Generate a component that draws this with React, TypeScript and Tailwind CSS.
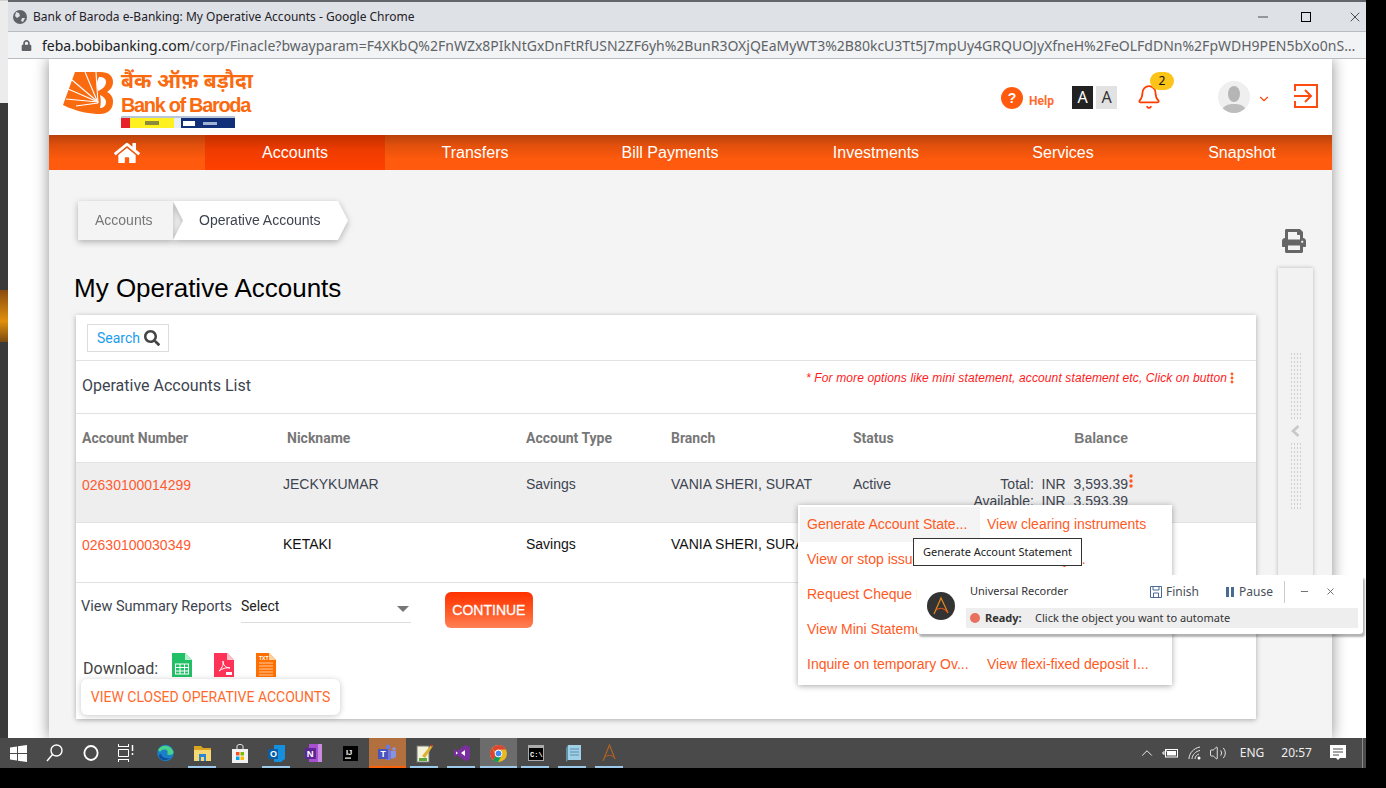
import React from "react";
import { FaHome, FaPrint, FaSearch, FaLock } from "react-icons/fa";
import { ChevronDown, ChevronUp, Bell, Volume2, Minus, X } from "lucide-react";

const arial = "font-['Liberation_Sans',Arial,sans-serif]";
const roboto = "font-['Roboto','Liberation_Sans',sans-serif]";
const noto = "font-['Noto_Sans','Open_Sans',sans-serif]";

function Dots({ small }: { small?: boolean }) {
  return (
    <svg width="4" height={small ? 12 : 14} viewBox={small ? "0 0 4 12" : "0 0 4 14"} className="block">
      <circle cx="2" cy={small ? 2 : 2} r={small ? 1.4 : 1.7} fill="#ff5a1f" />
      <circle cx="2" cy={small ? 6 : 7} r={small ? 1.4 : 1.7} fill="#ff5a1f" />
      <circle cx="2" cy={small ? 10 : 12} r={small ? 1.4 : 1.7} fill="#ff5a1f" />
    </svg>
  );
}

function Logo() {
  return (
    <div className="flex items-start gap-[8px] w-[174px] h-[58px]">
      <svg width="50" height="43" viewBox="0 0 50 43" className="block mt-px shrink-0">
        <path d="M12 0H37C46 0 50 4 50 10C50 15 47 18 44 20C48 22 50 25 50 30C50 38 44 42 37 42C28 42 14 40 0 33Z" fill="#fa6a0f" />
        <path d="M36 5C41 5 43 7 43 10C43 14 40 17 35 19C33 13 34 9 36 5Z" fill="#fff" />
        <path d="M37 23C41 25 43 27 43 30C43 34 40 36 37 36C38 32 38 27 37 23Z" fill="#fff" />
        <g stroke="#fff" strokeWidth="1.1" fill="none">
          <path d="M35 30L9 8" />
          <path d="M35 30L5 17" />
          <path d="M35 30L3 27" />
          <path d="M35 31L22 0" />
          <path d="M35 31L13 34" />
          <path d="M35 31L33 0" />
        </g>
      </svg>
      <div className="flex flex-col w-[116px]">
        <div className={`h-[24px] text-[21px] leading-[24px] font-bold text-[#fa6a0f] whitespace-nowrap font-['Noto_Sans_Devanagari','Lohit_Devanagari','Noto_Sans',sans-serif]`}>
          बैंक ऑफ़ बड़ौदा
        </div>
        <div className={`${arial} h-[20px] text-[20px] leading-[20px] font-bold text-[#fa6a0f] tracking-[-1.35px] whitespace-nowrap`}>
          Bank of Baroda
        </div>
        <div className="mt-px h-[2px] w-[114px] bg-[#b9c6d8]" />
        <div className="flex w-[114px] h-[10px]">
          <div className="w-[9px] bg-[#e8202a]" />
          <div className="w-[44px] bg-[#fff01f] flex justify-center items-center"><div className="w-[14px] h-[4px] bg-[#8c8a3a]" /></div>
          <div className="w-[7px] bg-[#e8eef5]" />
          <div className="flex-1 bg-[#12307a] flex items-center gap-[8px] pl-[2px]">
            <div className="w-[12px] h-[5px] bg-white" />
            <div className="w-[14px] h-[3px] bg-[#9fb2d6]" />
          </div>
        </div>
      </div>
    </div>
  );
}

function FileIcon({ color, fold, kind }: { color: string; fold: string; kind: "sheet" | "pdf" | "txt" }) {
  return (
    <svg width="20" height="24" viewBox="0 0 20 24" className="block">
      <path d="M0 0H13L20 7V24H0Z" fill={color} />
      <path d="M13 0L20 7H13Z" fill={fold} />
      {kind === "sheet" && (
        <g stroke="#fff" strokeWidth="1" fill="none">
          <rect x="3.5" y="11" width="13" height="10" />
          <path d="M3.5 14.5H16.5M3.5 18H16.5M8 11V21M12.5 11V21" />
        </g>
      )}
      {kind === "pdf" && (
        <g>
          <path d="M5 18C9 14 10 10 9 8C8 10 11 15 16 15C12 14 8 16 5 18Z" stroke="#fff" strokeWidth="1" fill="none" />
          <rect x="12" y="19" width="6" height="3" fill="#fff" />
        </g>
      )}
      {kind === "txt" && (
        <g>
          <text x="3" y="7" fontSize="5" fontWeight="700" fill="#fff" fontFamily="Liberation Sans">TXT</text>
          <path d="M3 10H17M3 13H17M3 16H17M3 19H17M3 22H17" stroke="#ffc9a0" strokeWidth="1" />
        </g>
      )}
    </svg>
  );
}

function Stripes() {
  const cells = Array.from({ length: 68 });
  return (
    <div className="grid grid-cols-4 gap-x-[2px] gap-y-[2px] w-[10px]">
      {cells.slice(0, 4 * 17).map((_, i) => (
        <div key={i} className={`w-[1px] h-[2px] bg-[#cfcfcf]`} />
      ))}
    </div>
  );
}

function Tb({ children, bg, line, wide }: { children?: React.ReactNode; bg?: string; line?: string; wide?: boolean }) {
  return (
    <div className={`w-[37px] h-[30px] flex items-center justify-center relative ${bg ?? ""}`}>
      {children}
      {line && <div className={`absolute bottom-0 h-[2px] ${wide ? "left-0 right-0" : "left-[4px] right-[5px]"} ${line}`} />}
    </div>
  );
}

function Taskbar() {
  const blue = "bg-[#9dc9ea]";
  return (
    <div className="w-[1366px] h-[30px] bg-[#4a4a4a] flex items-center shrink-0 text-white">
      <div className="w-[36px] flex justify-center">
        <svg width="17" height="17" viewBox="0 0 17 17"><path d="M0 2.5L7 1.5V8H0ZM8 1.3L17 0V8H8ZM0 9H7V15.5L0 14.5ZM8 9H17V17L8 15.7Z" fill="#fff" /></svg>
      </div>
      <div className="w-[37px] flex justify-center">
        <svg width="17" height="18" viewBox="0 0 17 18" fill="none" stroke="#fff" strokeWidth="1.4"><circle cx="10.5" cy="6.5" r="5.5" /><path d="M6.5 10.5L1 17" /></svg>
      </div>
      <div className="w-[36px] flex justify-center">
        <svg width="16" height="16" viewBox="0 0 16 16" fill="none" stroke="#fff" strokeWidth="1.8"><ellipse cx="8" cy="8" rx="6.6" ry="7" /></svg>
      </div>
      <div className="w-[38px] flex justify-center pr-[4px]">
        <svg width="16" height="18" viewBox="0 0 16 18" fill="none" stroke="#fff" strokeWidth="1"><path d="M0 2.5H11M0 15.5H11M0.5 5.5H10.5V12.5H0.5Z" /><path d="M0.5 0V2M10.5 0V2M0.5 16V18M10.5 16V18" /><path d="M14.5 1V7M14.5 9V11" strokeWidth="1.5" /></svg>
      </div>
      <Tb>
        <svg width="17" height="18" viewBox="0 0 17 18"><circle cx="8.5" cy="9" r="8.3" fill="#1a7fc4" /><path d="M1 6C4 0 14 0 16.5 8C16.8 11 12 12 10 10C13 6 6 3 3 8Z" fill="#49d28c" /><path d="M4 10C5 14 10 15 13 14C9 18 2 16 2 11Z" fill="#0c4fa0" /></svg>
      </Tb>
      <Tb line={blue}>
        <svg width="17" height="17" viewBox="0 0 17 17"><path d="M0 1H7L9 3H17V6H0Z" fill="#d9a520" /><path d="M0 5H17V16H0Z" fill="#f7d774" /><path d="M5 9H12V16H10V12H7V16H5Z" fill="#2a86d4" /></svg>
      </Tb>
      <Tb>
        <svg width="16" height="19" viewBox="0 0 16 19"><path d="M0 5H16V19H0Z" fill="#f2f2f2" /><path d="M5 5V2C5 0 11 0 11 2V5" stroke="#e8e8e8" strokeWidth="1" fill="none" /><rect x="4" y="8" width="3.5" height="3.5" fill="#f25022" /><rect x="8.5" y="8" width="3.5" height="3.5" fill="#7fba00" /><rect x="4" y="12.5" width="3.5" height="3.5" fill="#00a4ef" /><rect x="8.5" y="12.5" width="3.5" height="3.5" fill="#ffb900" /></svg>
      </Tb>
      <Tb line={blue}>
        <svg width="17" height="17" viewBox="0 0 17 17"><path d="M6 0H17V14L13 17H6Z" fill="#1490df" /><rect x="0" y="4" width="10" height="10" fill="#0a5ea8" /><text x="2" y="12" fontSize="9" fontWeight="700" fill="#fff" fontFamily="Liberation Sans">O</text></svg>
      </Tb>
      <Tb>
        <svg width="17" height="18" viewBox="0 0 17 18"><rect x="4" y="0" width="13" height="18" fill="#a64fd0" /><rect x="13" y="0" width="4" height="18" fill="#c98ae0" /><rect x="0" y="4" width="11" height="11" fill="#5e2594" /><text x="1.8" y="13" fontSize="9.5" fontWeight="700" fill="#fff" fontFamily="Liberation Sans">N</text></svg>
      </Tb>
      <Tb>
        <svg width="15" height="15" viewBox="0 0 15 15"><rect width="15" height="15" fill="#000" /><text x="3" y="8.5" fontSize="7.5" fontWeight="700" fill="#fff" fontFamily="Liberation Sans">IJ</text><rect x="2" y="11.5" width="6" height="1.2" fill="#fff" /></svg>
      </Tb>
      <Tb bg="bg-[#b3703f]" line="bg-[#f7630c]" wide>
        <svg width="19" height="18" viewBox="0 0 19 18"><circle cx="10" cy="3" r="2.4" fill="#6f78d8" /><circle cx="16" cy="5" r="1.8" fill="#8a93e0" /><path d="M6 6H13V15C10 18 7 15 6 13Z" fill="#6f78d8" /><path d="M13 7H18V12C18 14 15 15 13 14Z" fill="#8a93e0" /><rect x="0" y="5" width="10" height="10" fill="#4b53bc" /><text x="2.6" y="13" fontSize="8.5" fontWeight="700" fill="#fff" fontFamily="Liberation Sans">T</text></svg>
      </Tb>
      <Tb line={blue}>
        <svg width="17" height="19" viewBox="0 0 17 19"><rect x="1" y="2" width="12" height="16" fill="#f4f4dc" stroke="#777" strokeWidth="1" /><path d="M3 14H11V17H3Z" fill="#5aa83c" /><path d="M6 12L15 1L17 2L9 14Z" fill="#e0b030" /><path d="M14 1L17 0L16 3Z" fill="#a33" /></svg>
      </Tb>
      <Tb line={blue}>
        <svg width="16" height="16" viewBox="0 0 16 16"><path d="M11 0L16 2V14L11 16L3 10L1 12L0 11V5L1 4L3 6Z" fill="#7a2f9e" /><path d="M11 5L7 8L11 11ZM2 6.5V9.5L4 8Z" fill="#fff" /></svg>
      </Tb>
      <Tb bg="bg-[#6c6c6c]" line={blue} wide>
        <svg width="17" height="17" viewBox="0 0 17 17"><circle cx="8.5" cy="8.5" r="8.5" fill="#e8b923" /><path d="M8.5 0A8.5 8.5 0 0 1 16 4.5H8.5A4 4 0 0 0 4.8 6.4L2.2 2.9A8.5 8.5 0 0 1 8.5 0Z" fill="#db4437" /><path d="M2.2 2.9L6 10.5L3.2 15.2A8.5 8.5 0 0 1 2.2 2.9Z" fill="#db4437" /><path d="M6 10.5A4 4 0 0 0 11 11.8L8 17A8.5 8.5 0 0 1 3.2 15.2Z" fill="#0f9d58" /><circle cx="8.5" cy="8.5" r="3.4" fill="#4285f4" stroke="#fff" strokeWidth="1" /></svg>
      </Tb>
      <Tb line={blue}>
        <svg width="16" height="16" viewBox="0 0 16 16"><rect width="16" height="16" fill="#aaa" /><rect x="1" y="3" width="14" height="12" fill="#000" /><text x="2" y="11.5" fontSize="7" fontWeight="700" fill="#fff" fontFamily="Liberation Mono">C:\</text></svg>
      </Tb>
      <Tb line={blue}>
        <svg width="16" height="18" viewBox="0 0 16 18"><path d="M3 1H16V16H1Z" fill="#9fd0e8" /><path d="M1 4L3 1V16L1 18Z" fill="#5d8fa8" /><path d="M5 5H14M5 8H14M5 11H14" stroke="#5d8fa8" strokeWidth="1" /></svg>
      </Tb>
      <Tb line={blue}>
        <svg width="15" height="18" viewBox="0 0 15 18" fill="none"><path d="M1 17L7.5 1L13 15" stroke="#b5651d" strokeWidth="1.1" /><path d="M3 13C7 10 11 11 13 15" stroke="#c2541c" strokeWidth="1" /></svg>
      </Tb>
      <div className="flex-1 flex items-center h-full relative">
        <div className="flex-1" />
        <ChevronUp size={18} strokeWidth={1.2} className="mr-[6px]" />
        <svg width="17" height="12" viewBox="0 0 17 12" className="mr-[9px]" fill="none" stroke="#fff"><rect x="3.5" y="2.5" width="12" height="7.5" /><rect x="5" y="4" width="9" height="4.5" fill="#fff" stroke="none" /><path d="M1 5H4V3M1 5V7H3" /></svg>
        <svg width="14" height="14" viewBox="0 0 14 14" className="mr-[7px]" fill="none" stroke="#e4e4e4" strokeWidth="1"><path d="M1 13C1 7 6 2 12 1M4 13C4 9 8 5 12 4.5M7 13C7 10.500 9 8.500 11 8" /><circle cx="11" cy="12" r="1.5" fill="#fff" stroke="none" /></svg>
        <Volume2 size={18} strokeWidth={1.1} className="mr-[13px]" />
        <span className={`${noto} text-[12px] mr-[17px] text-[#eee]`}>ENG</span>
        <span className={`${noto} text-[12px] mr-[18px] text-[#eee]`}>20:57</span>
        <svg width="16" height="17" viewBox="0 0 16 17" className="mr-[20px]"><path d="M0 0H16V13H10L8 15L6 13H0Z" fill="#fff" /><path d="M3 4H13M3 7H13M3 10H9" stroke="#4a4a4a" strokeWidth="1" /></svg>
        <div className="absolute right-[3px] top-0 bottom-0 w-px bg-[#8a8a8a]" />
      </div>
    </div>
  );
}

function Row({ num, nick, branch, status, shaded, dark, balance }: { num: string; nick: string; branch: string; status?: string; shaded?: boolean; dark?: boolean; balance?: boolean }) {
  const tone = dark ? "text-[#111]" : "text-[#3d4450]";
  return (
    <div className={`h-[60px] border-b border-[#e2e2e2] pl-[6px] grid grid-cols-[201px_243px_145px_182px_275px_47px_auto] text-[14px] leading-[20px] pt-[11px] ${shaded ? "bg-[#eeeeee]" : "bg-white"} ${tone} ${arial}`}>
      <div className="text-[#ff5a30] pt-px">{num}</div>
      <div>{nick}</div>
      <div>{shaded ? "Savings" : "Savings"}</div>
      <div>{branch}</div>
      <div className="relative">
        {status}
        {balance && (
          <div className="absolute right-0 top-0 text-right">
            <div className="whitespace-nowrap leading-[20px]">Total:&nbsp; INR&nbsp; 3,593.39</div>
            <div className="whitespace-nowrap leading-[15px]">Available:&nbsp; INR&nbsp; 3,593.39</div>
          </div>
        )}
      </div>
      <div className="pl-[1px] pt-[-1px]"><Dots /></div>
    </div>
  );
}

function MenuItem({ text, hover }: { text: string; hover?: boolean }) {
  return (
    <div className={`w-[180px] h-[35px] flex items-center pl-[7px] text-[14px] text-[#ff5a1f] whitespace-nowrap ${arial} ${hover ? "bg-[#f4f4f4]" : ""}`}>
      {text}
    </div>
  );
}

export default function App() {
  return (
    <div className="relative w-[1386px] h-[788px] bg-black overflow-hidden flex flex-col">
      <div className="flex h-[738px] shrink-0 w-[1366px]">
        {/* desktop sliver */}
        <div className="w-[8px] flex flex-col shrink-0">
          <div className="h-[103px] bg-[#ececec] border-t border-[#d0d0d0]" />
          <div className="h-[187px] bg-[#3a3a3a]" />
          <div className="h-[52px] bg-[linear-gradient(180deg,#8a4a10,#e0900c_60%,#7a4a10)]" />
          <div className="flex-1 bg-[#3a3a3a]" />
        </div>
        {/* browser window */}
        <div className="w-[1358px] flex flex-col">
          <div className="h-[32px] bg-[#dee1e6] border-t-2 border-[#62666a] border-b border-b-[#b9bcc0] flex items-center shrink-0 pl-[5px]">
            <svg width="14" height="14" viewBox="0 0 14 14" className="mr-[6px]"><circle cx="7" cy="7" r="7" fill="#5f6368" /><path d="M3 2L6 3L7 6L4 8L2 6ZM9 8L12 8L10 12L8 11Z" fill="#dee1e6" /></svg>
            <span className={`${noto} text-[12px] text-[#1f2226] whitespace-nowrap`}>Bank of Baroda e-Banking: My Operative Accounts - Google Chrome</span>
            <div className="flex-1" />
            <Minus size={16} strokeWidth={1} className="text-black mr-[30px]" />
            <div className="w-[10px] h-[10px] border border-black mr-[36px]" />
            <X size={16} strokeWidth={1} className="text-black mr-[3px]" />
          </div>
          <div className="h-[27px] bg-[#f1f3f4] border-b border-[#b9bcc0] flex items-center shrink-0 pl-[13px]">
            <FaLock size={11} className="text-[#5f6368] mr-[10px] shrink-0" />
            <div className={`${noto} text-[14px] text-[#5f6368] truncate w-[1316px]`}>
              <span className="text-[#202124]">feba.bobibanking.com</span>/corp/Finacle?bwayparam=F4XKbQ%2FnWZx8PIkNtGxDnFtRfUSN2ZF6yh%2BunR3OXjQEaMyWT3%2B80kcU3Tt5J7mpUy4GRQUOJyXfneH%2FeOLFdDNn%2FpWDH9PEN5bXo0nSFLJtSA3xk3ZqW8nPqLm2R7T
            </div>
          </div>
          <div className="flex-1 bg-white pl-[41px] overflow-hidden">
            <div className="w-[1283px] h-[679px] flex flex-col shadow-[0_0_14px_rgba(0,0,0,0.45)]">
              {/* header */}
              <div className="h-[76px] bg-white flex items-center shrink-0 pl-[14px]">
                <div className="pt-[6px]"><Logo /></div>
                <div className="flex-1" />
                <div className="w-[22px] h-[22px] rounded-full bg-[#ff5a0d] text-white flex items-center justify-center text-[14px] font-bold mt-[2px] font-['Liberation_Sans']">?</div>
                <span className={`${roboto} text-[12px] font-bold text-[#ff6a2c] ml-[6px] mt-[8px]`}>Help</span>
                <div className={`w-[21px] h-[23px] bg-[#222] text-white flex items-center justify-center text-[16px] ml-[18px] ${noto}`}>A</div>
                <div className={`w-[21px] h-[23px] bg-[#e2e2e2] text-[#333] flex items-center justify-center text-[16px] ml-[3px] ${noto}`}>A</div>
                <div className="relative ml-[19px] w-[26px] h-[26px]">
                  <Bell size={26} strokeWidth={1.6} className="text-[#ff3d00]" />
                  <div className={`absolute left-[14px] top-[-12px] w-[24px] h-[18px] rounded-full bg-[#fcc419] text-[12px] text-[#111] flex items-center justify-center ${noto}`}>2</div>
                </div>
                <div className="ml-[56px] w-[32px] h-[32px] rounded-full bg-[#efefef] overflow-hidden">
                  <svg width="32" height="32" viewBox="0 0 32 32"><ellipse cx="16" cy="13" rx="6" ry="8" fill="#b5b5b5" /><path d="M3 32C4 24 11 23 16 23C21 23 28 24 29 32Z" fill="#bdbdbd" /></svg>
                </div>
                <ChevronDown size={14} strokeWidth={2} className="text-[#ff4a10] ml-[7px] mt-[4px]" />
                <svg width="24" height="24" viewBox="0 0 24 24" fill="none" stroke="#ff4a10" strokeWidth="2" className="ml-[23px] mr-[14px] -mt-[3px]">
                  <path d="M1 7V1H23V23H1V17" />
                  <path d="M0 12H16M11 6L17 12L11 18" />
                </svg>
              </div>
              {/* nav */}
              <div className={`h-[35px] shrink-0 flex bg-[linear-gradient(180deg,#b8420c_0%,#e2500c_30%,#ff5a0d_70%)] text-white text-[16px] ${arial}`}>
                <div className="w-[156px] flex items-center justify-center"><FaHome size={26} /></div>
                <div className="w-[180px] flex items-center justify-center bg-[linear-gradient(180deg,#c23000_0%,#f03c00_45%,#ff4000_100%)]">Accounts</div>
                <div className="w-[180px] flex items-center justify-center">Transfers</div>
                <div className="w-[210px] flex items-center justify-center">Bill Payments</div>
                <div className="w-[202px] flex items-center justify-center">Investments</div>
                <div className="w-[172px] flex items-center justify-center">Services</div>
                <div className="w-[183px] flex items-center justify-center pl-[3px]">Snapshot</div>
              </div>
              {/* content */}
              <div className="flex-1 bg-[#f4f4f4] flex min-h-0">
                <div className="w-[1207px] pl-[27px] shrink-0 flex flex-col">
                  <div className="pt-[31px] pl-[2px] drop-shadow-[0_2px_3px_rgba(0,0,0,0.28)]">
                    <div className={`flex h-[39px] text-[14px] ${arial}`}>
                      <div className="w-[95px] bg-[#f4f4f4] flex items-center pl-[17px] text-[#777]">Accounts</div>
                      <div className="w-[175px] bg-white flex items-center pl-[26px] text-[#3d4450] [clip-path:polygon(0_0,165px_0,175px_50%,165px_100%,0_100%,10px_50%)]">Operative Accounts</div>
                    </div>
                  </div>
                  <h1 className={`${arial} text-[26px] leading-[36px] text-black mt-[30px] -ml-[2px] mb-[9px]`}>My Operative Accounts</h1>
                  <div className="w-[1180px] h-[404px] bg-white shadow-[0_1px_5px_rgba(0,0,0,0.3)] flex flex-col">
                    <div className="h-[46px] border-b border-[#e2e2e2] pl-[11px] pt-[9px] shrink-0">
                      <div className={`w-[82px] h-[28px] border border-[#dcdcdc] flex items-center pl-[9px] gap-[4px] text-[14px] text-[#1a9cf0] ${roboto}`}>
                        Search <FaSearch size={16} className="text-[#444]" />
                      </div>
                    </div>
                    <div className="h-[53px] border-b border-[#e2e2e2] flex pl-[6px] shrink-0">
                      <div className={`${roboto} text-[16px] leading-[50px] text-[#3d4450]`}>Operative Accounts List</div>
                      <div className="flex-1" />
                      <div className={`${arial} italic text-[12px] text-[#ff1a1a] leading-[34px] whitespace-nowrap tracking-[0.12px] mr-[3px]`}>* For more options like mini statement, account statement etc, Click on button</div>
                      <div className="w-[26px] pt-[11px]"><Dots small /></div>
                    </div>
                    <div className={`h-[49px] border-b border-[#e2e2e2] pl-[6px] grid grid-cols-[201px_243px_145px_182px_275px] items-center text-[14px] font-bold text-[#777] shrink-0 ${roboto}`}>
                      <div>Account Number</div>
                      <div className="pl-[4px]">Nickname</div>
                      <div>Account Type</div>
                      <div>Branch</div>
                      <div className="relative">Status<span className={`absolute right-0 ${arial}`}>Balance</span></div>
                    </div>
                    <Row num="02630100014299" nick="JECKYKUMAR" branch="VANIA SHERI, SURAT" status="Active" shaded balance />
                    <Row num="02630100030349" nick="KETAKI" branch="VANIA SHERI, SURAT" dark />
                    <div className="flex items-start pl-[5px] pt-[9px] h-[32px] mt-0 shrink-0">
                      <span className={`${roboto} text-[14.5px] leading-[30px] text-[#3d4450] mt-[0px] whitespace-nowrap`}>View Summary Reports</span>
                      <div className="ml-[9px] w-[170px] h-[31px] border-b border-[#dcdcdc] relative shrink-0">
                        <span className={`${roboto} text-[14px] leading-[29px] text-[#222]`}>Select</span>
                        <div className="absolute right-[2px] top-[14px] w-0 h-0 border-l-[6.500px] border-r-[6.500px] border-t-[6px] border-l-transparent border-r-transparent border-t-[#777]" />
                      </div>
                      <div className={`ml-[34px] w-[88px] h-[36px] rounded-[6px] bg-[linear-gradient(180deg,#ff3000_0%,#ff5a26_55%,#ff8055_100%)] text-white text-[14px] flex items-center justify-center ${arial} [-webkit-text-stroke:0.3px_white]`}>CONTINUE</div>
                    </div>
                    <div className="flex items-start pl-[7px] mt-[38px] h-[24px] shrink-0">
                      <span className={`${roboto} text-[16px] leading-[22px] text-[#444] mt-[5px] w-[89px]`}>Download:</span>
                      <FileIcon color="#22c066" fold="#b7efcf" kind="sheet" />
                      <div className="w-[22px]" />
                      <FileIcon color="#ff3358" fold="#ffc0cc" kind="pdf" />
                      <div className="w-[22px]" />
                      <FileIcon color="#ff7000" fold="#ffd0a0" kind="txt" />
                    </div>
                    <div className={`ml-[5px] mt-[2px] w-[259px] h-[36px] rounded-[6px] bg-white shadow-[0_1px_6px_rgba(0,0,0,0.22)] flex items-center justify-center text-[14px] text-[#ff6a2c] ${roboto}`}>VIEW CLOSED OPERATIVE ACCOUNTS</div>
                  </div>
                </div>
                <div className="ml-[22px] w-[35px] shrink-0 flex flex-col items-center">
                  <FaPrint size={24} className="text-[#666] mt-[59px] mb-[15px] mr-[3px]" />
                  <div className="w-[35px] h-[360px] bg-[#f2f2f2] shadow-[0_0_4px_rgba(0,0,0,0.25)] flex flex-col items-center pt-[85px]">
                    <Stripes />
                    <svg width="9" height="12" viewBox="0 0 9 12" className="my-[6px]"><path d="M7.5 1L2 6L7.500 11" stroke="#c8c8c8" strokeWidth="2.6" fill="none" /></svg>
                    <Stripes />
                  </div>
                </div>
              </div>
            </div>
          </div>
        </div>
      </div>
      <Taskbar />

      {/* action menu */}
      <div className="absolute left-[798px] top-[505px] w-[374px] h-[180px] bg-white shadow-[0_1px_6px_rgba(0,0,0,0.35)] pl-[2px] pt-[2px] flex flex-wrap content-start">
        <MenuItem text="Generate Account State..." hover />
        <MenuItem text="View clearing instruments" />
        <MenuItem text="View or stop issued che..." />
        <MenuItem text="View Monthly ..." />
        <MenuItem text="Request Cheque Book" />
        <MenuItem text="" />
        <MenuItem text="View Mini Statement" />
        <MenuItem text="" />
        <MenuItem text="Inquire on temporary Ov..." />
        <MenuItem text="View flexi-fixed deposit I..." />
      </div>
      {/* tooltip */}
      <div className={`absolute left-[913px] top-[538px] w-[169px] h-[28px] bg-white border border-[#333] flex items-center justify-center text-[11px] text-[#222] ${noto}`}>Generate Account Statement</div>
      {/* recorder */}
      <div className={`absolute left-[917px] top-[575px] w-[446px] h-[59px] bg-white rounded-[3px] shadow-[2px_3px_2px_rgba(0,0,0,0.3)] flex ${noto}`}>
        <div className="w-[49px] flex items-center justify-center">
          <svg width="28" height="28" viewBox="0 0 28 28" className="mt-[2px] ml-[-1px]"><circle cx="14" cy="14" r="14" fill="#333" /><path d="M7 22L14 6L21 21" stroke="#e88a1c" strokeWidth="1.2" fill="none" /><path d="M9 18C13 15 18 16 21 21" stroke="#d9541c" strokeWidth="1.1" fill="none" /></svg>
        </div>
        <div className="flex-1 flex flex-col pr-[5px]">
          <div className="h-[33px] flex items-center text-[11px] text-[#333] pl-[4px]">
            <span className="w-[180px] whitespace-nowrap">Universal Recorder</span>
            <svg width="12" height="12" viewBox="0 0 12 12" fill="none" stroke="#4a6a94" strokeWidth="1" className="mr-[4px]"><path d="M.5.500H11.500V11.500H.5Z" /><path d="M3 .500V4H9V.500M3.500 11.500V7H8.500V11.500" /></svg>
            <span className="text-[12px] w-[60px] text-[#4a5058]">Finish</span>
            <span className="w-[15px] flex gap-[2px]"><span className="w-[3px] h-[10px] bg-[#4a6a94]" /><span className="w-[3px] h-[10px] bg-[#4a6a94]" /></span>
            <span className="text-[12px] w-[46px] text-[#4a5058] -ml-[2px]">Pause</span>
            <div className="w-px h-[22px] bg-[#ccc] mr-[14px] ml-[-1px]" />
            <Minus size={11} className="text-[#666] mr-[15px]" />
            <X size={11} className="text-[#666]" />
          </div>
          <div className="h-[20px] bg-[#eeeeee] flex items-center text-[11px] text-[#333] pl-[4px]">
            <span className="w-[10px] h-[10px] rounded-full bg-[#e8705f] mr-[5px]" />
            <span className="font-bold w-[50px]">Ready:</span>
            <span className="whitespace-nowrap">Click the object you want to automate</span>
          </div>
        </div>
      </div>
    </div>
  );
}
